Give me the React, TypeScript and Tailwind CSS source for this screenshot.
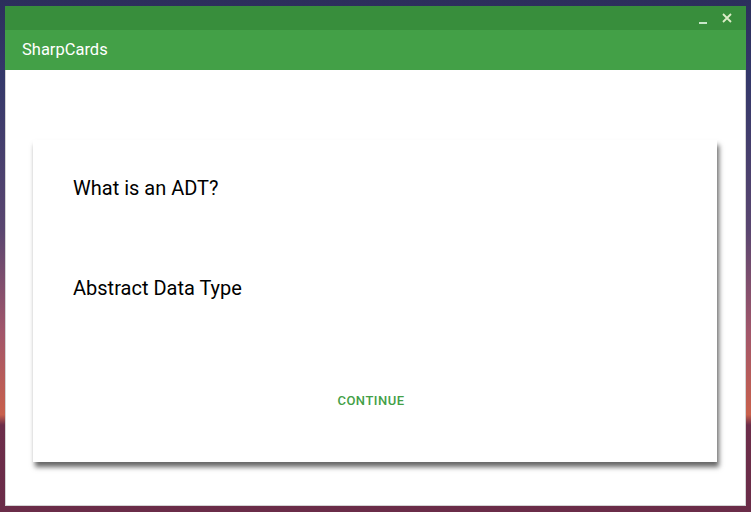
import React from 'react';

const App: React.FC = () => {
  return (
    <div
      className="w-[751px] h-[512px] overflow-hidden pt-[6px] pb-[6px] pl-[5px] pr-[5px] bg-[linear-gradient(180deg,#2c2f5c_0%,#34386a_15%,#5a4670_45%,#a2566a_65%,#c8604c_81%,#6c2d4a_83%,#6a2c48_100%)]"
      style={{ fontFamily: 'Roboto, "Noto Sans", sans-serif' }}
    >
      <div className="w-full h-full flex flex-col">
        {/* Title bar */}
        <div className="h-[24px] bg-[#388e3c] flex items-center justify-end pr-[14px] gap-[14px]">
          <svg width="9" height="9" viewBox="0 0 9 9" className="mt-[3px]">
            <rect x="0" y="7" width="8" height="2" fill="#c8e6c9" />
          </svg>
          <svg width="10" height="10" viewBox="0 0 10 10">
            <path d="M1 1 L9 9 M9 1 L1 9" stroke="#dcedc8" strokeWidth="1.8" />
          </svg>
        </div>

        {/* Toolbar */}
        <div className="h-[40px] bg-[#43a047] flex items-center pl-[17px]">
          <span className="text-white text-[16.5px]">SharpCards</span>
        </div>

        {/* Content */}
        <div className="flex-1 bg-white border-x border-b border-[#d4d4d4] pt-[70px] pl-[27px] pr-[28px] pb-[43px]">
          <div className="h-full bg-white shadow-[2px_5px_5px_rgba(0,0,0,0.6)] flex flex-col pl-[40px] pt-[36px]">
            <p className="text-[20px] leading-[24px] text-black">What is an ADT?</p>
            <p className="text-[20px] leading-[24px] text-black mt-[76px]">Abstract Data Type</p>
            <div className="flex-1 flex items-end justify-center pb-[52px] pr-[48px]">
              <span className="text-[13px] font-medium tracking-[0.5px] text-[#43a047]">CONTINUE</span>
            </div>
          </div>
        </div>
      </div>
    </div>
  );
};

export default App;
